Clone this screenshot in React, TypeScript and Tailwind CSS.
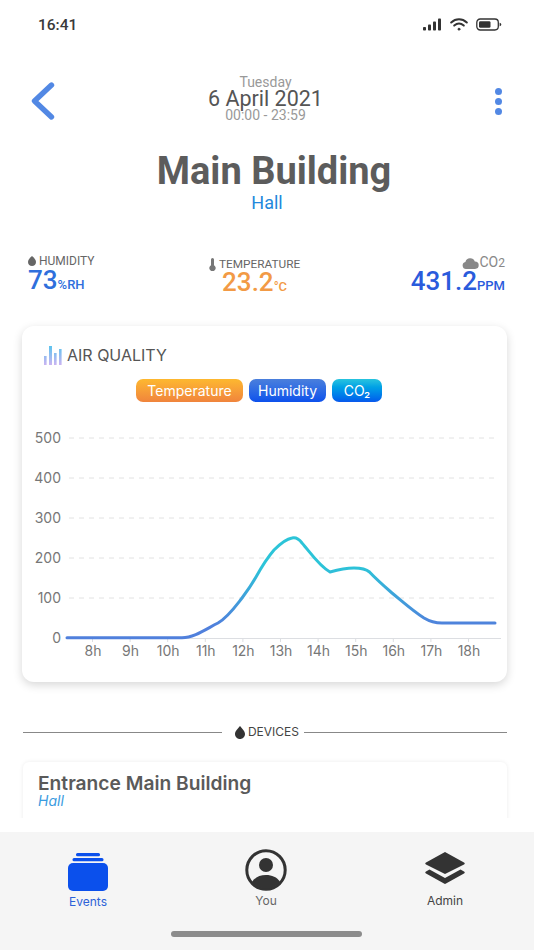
const yLabels = [
  { label: "500", y: 112 },
  { label: "400", y: 152 },
  { label: "300", y: 192 },
  { label: "200", y: 232 },
  { label: "100", y: 272 },
];
const hours = ["8h", "9h", "10h", "11h", "12h", "13h", "14h", "15h", "16h", "17h", "18h"];

function StatusBar() {
  return (
    <div className="flex h-[50px] shrink-0 items-center justify-between pl-[38px] pr-[32px] pt-[1px]">
      <span className="font-['Roboto',sans-serif] text-[15.5px] font-medium text-[#3a3a3a]">16:41</span>
      <div className="mb-[3px] flex items-center gap-[8px]">
        <svg width="19" height="13" viewBox="0 0 19 13" fill="#333">
          <rect x="0" y="9" width="3" height="3.5" rx="0.8" />
          <rect x="5" y="6.5" width="3" height="6" rx="0.8" />
          <rect x="10" y="3.5" width="3" height="9" rx="0.8" />
          <rect x="15" y="0.5" width="3" height="12" rx="0.8" />
        </svg>
        <svg width="18" height="13" viewBox="0 0 18 13" fill="none" stroke="#333" strokeWidth="2" strokeLinecap="round">
          <path d="M1.2 4.5C5.8 0.2 12.2 0.2 16.8 4.5" />
          <path d="M4.2 7.6C7.2 5 10.8 5 13.8 7.6" />
          <circle cx="9" cy="11.2" r="1.1" fill="#333" strokeWidth="0.6" />
        </svg>
        <svg width="26" height="13" viewBox="0 0 26 13" fill="none">
          <rect x="0.8" y="1" width="21.5" height="11" rx="3.4" stroke="#333" strokeWidth="1.3" />
          <rect x="3" y="3.2" width="11.5" height="6.6" rx="1.4" fill="#333" />
          <path d="M23.6 4.7C24.8 5.1 25.3 5.7 25.3 6.5C25.3 7.3 24.8 7.9 23.6 8.3Z" fill="#333" />
        </svg>
      </div>
    </div>
  );
}

function Header() {
  return (
    <div className="mt-[26px] flex items-start justify-between pl-[30px] pr-[32px]">
      <svg width="26" height="40" viewBox="0 0 26 40" fill="none" className="mt-[5px]">
        <path d="M21.5 4L4.5 20L21.5 36" stroke="#5288e4" strokeWidth="5.4" strokeLinecap="round" strokeLinejoin="round" />
      </svg>
      <div className="mr-[20px] flex flex-col items-center font-['Roboto',sans-serif]">
        <span className="text-[14px] leading-[13px] text-[#999]">Tuesday</span>
        <span className="text-[21.5px] leading-[19px] text-[#555]">6 April 2021</span>
        <span className="text-[14px] leading-[14px] text-[#999]">00:00 - 23:59</span>
      </div>
      <div className="mt-[12px] flex flex-col gap-[3px]">
        <span className="size-[7px] rounded-full bg-[#5288e4]" />
        <span className="size-[7px] rounded-full bg-[#5288e4]" />
        <span className="size-[7px] rounded-full bg-[#5288e4]" />
      </div>
    </div>
  );
}

function Stats() {
  return (
    <div className="mt-[41px] flex items-start justify-between pl-[28px] pr-[29px] font-['Roboto',sans-serif]">
      <div>
        <div className="flex items-center gap-[3px] text-[12px] leading-[14px] text-[#666]">
          <svg width="8" height="10" viewBox="0 0 8 10" fill="#666">
            <path d="M4 0C5.8 1.6 8 3.6 8 6C8 8.4 6.2 10 4 10C1.8 10 0 8.4 0 6C0 3.6 2.2 1.6 4 0Z" />
          </svg>
          HUMIDITY
        </div>
        <div className="-mt-[1px] flex items-baseline font-medium text-[#2f6fdc]">
          <span className="text-[26px] leading-[26px]">73</span>
          <span className="text-[13px] leading-[13px]">%RH</span>
        </div>
      </div>
      <div className="ml-[4px] mt-[3px] flex flex-col items-center">
        <div className="flex items-center gap-[3px] text-[11.8px] leading-[14px] text-[#666]">
          <svg width="7" height="13" viewBox="0 0 7 13" fill="#777">
            <path d="M2 1.5a1.5 1.5 0 0 1 3 0V7.2a3.2 3.2 0 1 1-3 0Z" />
          </svg>
          TEMPERATURE
        </div>
        <div className="-mt-[2px] flex items-baseline font-medium text-[#f29a45]">
          <span className="text-[26px] leading-[26px]">23.2</span>
          <span className="text-[13px] leading-[13px]">°C</span>
        </div>
      </div>
      <div className="mt-[1px] flex flex-col items-end">
        <div className="flex items-center gap-[1px] text-[14px] leading-[15px] text-[#888]">
          <svg width="17" height="12" viewBox="0 0 17 12" fill="#888">
            <path d="M4 12A3.6 3.6 0 0 1 3.4 4.9A5 5 0 0 1 12.8 4.4A3.8 3.8 0 0 1 13 12Z" />
          </svg>
          <span>
            CO<span className="text-[12px]">2</span>
          </span>
        </div>
        <div className="-mt-[3px] flex items-baseline font-medium text-[#2a5bdc]">
          <span className="text-[26px] leading-[26px]">431.2</span>
          <span className="text-[13px] leading-[13px]">PPM</span>
        </div>
      </div>
    </div>
  );
}

function Chart() {
  return (
    <svg width="485" height="275" viewBox="0 80 485 275" className="mt-[4px] block font-['Inter',sans-serif]">
      <defs>
        <linearGradient id="curve" gradientUnits="userSpaceOnUse" x1="0" y1="300" x2="0" y2="240">
          <stop offset="0" stopColor="#5080dc" />
          <stop offset="1" stopColor="#2cc4d8" />
        </linearGradient>
      </defs>
      {yLabels.map((row) => (
        <g key={row.label}>
          <text x="39" y={row.y + 5} textAnchor="end" fontSize="14" fill="#777">
            {row.label}
          </text>
          <line x1="47" x2="474" y1={row.y} y2={row.y} stroke="#e2e2e2" strokeWidth="1" strokeDasharray="5 5" />
        </g>
      ))}
      <text x="39" y="317" textAnchor="end" fontSize="14" fill="#777">
        0
      </text>
      <line x1="45" x2="479" y1="312.5" y2="312.5" stroke="#dcdee2" strokeWidth="1" />
      {hours.map((h, i) => (
        <g key={h}>
          <line x1={70.5 + i * 37.6} x2={70.5 + i * 37.6} y1="312" y2="316" stroke="#dcdee2" />
          <text x={71 + i * 37.6} y="330" textAnchor="middle" fontSize="14" fill="#777">
            {h}
          </text>
        </g>
      ))}
      <path
        d="M45 311.7L160 311.7C172 311.7 184 303 196 297C206 291 213 281 220 272C226 264 230 258 234 251C239 242 246 231 252 224C258 218 264 213 270 212C274 211 277 213 280 217C288 226 297 240 308 246C315 244 322 242 332 242C339 242 344 243 347.5 246C354 253 362 260 370 267C381 276 391 285 402 292C407 295 411 297 420 297L473 297"
        fill="none"
        stroke="url(#curve)"
        strokeWidth="3"
        strokeLinecap="round"
        strokeLinejoin="round"
      />
    </svg>
  );
}

function AirQuality() {
  return (
    <div className="ml-[22px] mr-[27px] mt-[31px] h-[356px] rounded-[12px] bg-white shadow-[0_3px_10px_rgba(0,0,0,0.16)]">
      <div className="flex items-end gap-[5px] pl-[22px] pt-[19px]">
        <svg width="18" height="19" viewBox="0 0 18 19">
          <defs>
            <linearGradient id="bars" gradientUnits="userSpaceOnUse" x1="0" y1="0" x2="0" y2="19">
              <stop offset="0" stopColor="#5cc4ee" />
              <stop offset="1" stopColor="#cbb4f2" />
            </linearGradient>
          </defs>
          <rect x="0" y="10" width="2.6" height="9" fill="url(#bars)" />
          <rect x="5" y="0" width="3" height="19" fill="url(#bars)" />
          <rect x="10" y="7" width="2.6" height="12" fill="url(#bars)" />
          <rect x="15" y="3" width="2.6" height="16" fill="url(#bars)" />
        </svg>
        <span className="text-[16px] leading-[20px] text-[#555]">AIR QUALITY</span>
      </div>
      <div className="mt-[14px] flex justify-center gap-[6px] pr-[11px] text-[14px] text-white">
        <span className="flex h-[23px] w-[107px] items-center justify-center rounded-[7px] bg-linear-to-b from-[#fdb82f] to-[#f0843c]">
          Temperature
        </span>
        <span className="flex h-[23px] w-[77px] items-center justify-center rounded-[7px] bg-linear-to-b from-[#4a7fdc] to-[#0c50ec]">
          Humidity
        </span>
        <span className="flex h-[23px] w-[50px] items-center justify-center rounded-[7px] bg-linear-to-b from-[#27c4de] to-[#0c58ec]">
          CO₂
        </span>
      </div>
      <Chart />
    </div>
  );
}

function Devices() {
  return (
    <div className="mt-[42px] pl-[23px] pr-[27px]">
      <div className="flex items-center">
        <div className="h-px flex-1 bg-[#888]" />
        <div className="flex items-center gap-[3px] pl-[13px] pr-[5px] text-[12px] leading-[16px] text-[#444]">
          <svg width="10" height="13" viewBox="0 0 10 13" fill="#333">
            <path d="M5 0C6.6 2.2 10 5 10 8C10 10.8 7.8 13 5 13C2.2 13 0 10.8 0 8C0 5 3.4 2.2 5 0Z" />
          </svg>
          DEVICES
        </div>
        <div className="h-px w-[203px] bg-[#888]" />
      </div>
      <div className="mt-[22px] h-[70px] rounded-t-[6px] px-[15px] pt-[11px] shadow-[0_0_4px_rgba(0,0,0,0.08)]">
        <div className="text-[19.2px] font-semibold leading-[20px] text-[#5a5a5a]">Entrance Main Building</div>
        <div className="text-[14px] italic leading-[15px] text-[#3a9be0]">Hall</div>
      </div>
    </div>
  );
}

function TabBar() {
  return (
    <div className="relative h-[118px] shrink-0 bg-[#f5f5f5] pl-[68px] pr-[68px] pt-[17px]">
      <div className="flex items-start justify-between">
        <div className="mt-[4px] flex flex-col items-center">
          <svg width="40" height="38" viewBox="0 0 40 38" fill="#0b50ec">
            <rect x="8" y="0" width="24" height="3.2" rx="1.5" />
            <rect x="4.5" y="5" width="31" height="3.2" rx="1.5" />
            <rect x="0" y="10" width="40" height="28" rx="5" />
          </svg>
          <span className="mt-[3px] text-[12px] leading-[16px] text-[#2c62d8]">Events</span>
        </div>
        <div className="flex flex-col items-center">
          <svg width="42" height="42" viewBox="0 0 42 42">
            <circle cx="21" cy="21" r="19.2" fill="none" stroke="#333" strokeWidth="3" />
            <circle cx="21" cy="16" r="7" fill="#333" />
            <path d="M7 33C10 28 15 26 21 26C27 26 32 28 35 33C31 37.5 26 39.5 21 39.5C16 39.5 11 37.5 7 33Z" fill="#333" />
          </svg>
          <span className="mt-[2px] text-[12px] leading-[16px] text-[#666]">You</span>
        </div>
        <div className="flex flex-col items-center">
          <svg width="42" height="42" viewBox="0 0 42 42" fill="#333">
            <path d="M21 3L40 13.5C41 14 41 14.8 40 15.4L21 25L2 15.4C1 14.8 1 14 2 13.5Z" />
            <path d="M5.5 20.5L21 29L36.5 20.5L40 22.5C41 23 41 23.8 40 24.4L22 34.6C21.4 35 20.6 35 20 34.6L2 24.4C1 23.8 1 23 2 22.5Z" />
          </svg>
          <span className="mt-[2px] text-[12px] leading-[16px] text-[#444]">Admin</span>
        </div>
      </div>
      <div className="absolute bottom-[13px] left-[171px] h-[6px] w-[191px] rounded-full bg-[#8c8c8c]" />
    </div>
  );
}

export default function App() {
  return (
    <div className="flex h-[950px] w-[534px] flex-col overflow-hidden bg-white font-['Inter',sans-serif]">
      <div className="h-[818px] shrink-0 overflow-hidden">
        <StatusBar />
        <Header />
        <div className="mt-[27px] flex flex-col items-center font-['Roboto',sans-serif]">
          <h1 className="ml-[14px] text-[38px] font-bold leading-[44px] text-[#5c5c5c]">Main Building</h1>
          <span className="text-[18px] leading-[20px] text-[#2388dc]">Hall</span>
        </div>
        <Stats />
        <AirQuality />
        <Devices />
      </div>
      <div className="flex-1" />
      <TabBar />
    </div>
  );
}
